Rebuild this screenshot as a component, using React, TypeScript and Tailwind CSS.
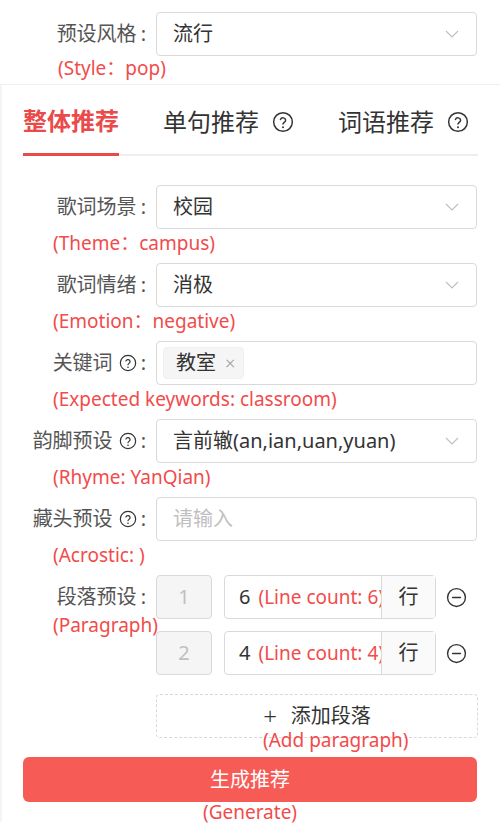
import React from "react";

const font = "font-['Noto_Sans','Noto_Sans_CJK_SC',sans-serif]";

const HelpIcon = ({ size = 18 }: { size?: number }) => (
  <svg
    width={size}
    height={size}
    viewBox="0 0 24 24"
    fill="none"
    stroke="#333"
    strokeWidth={1.6}
    strokeLinecap="round"
    strokeLinejoin="round"
  >
    <circle cx="12" cy="12" r="10.2" />
    <path d="M9.2 9.3a2.9 2.9 0 0 1 5.6 1c0 1.9-2.8 2.4-2.8 4" />
    <path d="M12 17.6h.01" strokeWidth={2.2} />
  </svg>
);

const Chevron = () => (
  <svg width="14" height="8" viewBox="0 0 14 8" fill="none">
    <polyline points="1,1 7,7 13,1" stroke="#bfbfbf" strokeWidth={1.2} />
  </svg>
);

const MinusCircle = () => (
  <svg width="21" height="21" viewBox="0 0 24 24" fill="none" stroke="#333" strokeWidth={1.6}>
    <circle cx="12" cy="12" r="10.2" />
    <path d="M7.5 12h9" strokeLinecap="round" />
  </svg>
);

const Note = ({ children, className = "" }: { children: React.ReactNode; className?: string }) => (
  <div className={`text-[19px] text-[#f24b4b] whitespace-nowrap ${className}`}>{children}</div>
);

const Label = ({ text, help }: { text: string; help?: boolean }) => (
  <div className="w-[156px] shrink-0 flex items-center justify-end pr-[10px] text-[20px] text-[#555]">
    <span>{text}</span>
    {help && (
      <span className="ml-[6px] flex items-center">
        <HelpIcon />
      </span>
    )}
    <span className="ml-[4px]">:</span>
  </div>
);

const Select = ({ value }: { value: string }) => (
  <div className="w-[321px] h-full flex items-center justify-between rounded-[4px] border border-[#d9d9d9] pl-[16px] pr-[17px] bg-white">
    <span className="text-[20px] text-[#333]">{value}</span>
    <Chevron />
  </div>
);

const Field = ({
  label,
  help,
  note,
  children,
}: {
  label: string;
  help?: boolean;
  note: string;
  children: React.ReactNode;
}) => (
  <div>
    <div className="flex h-[44px]">
      <Label text={label} help={help} />
      {children}
    </div>
    <Note className="h-[34px] leading-[28px] pl-[53px]">{note}</Note>
  </div>
);

const ParagraphRow = ({ index, lines }: { index: number; lines: number }) => (
  <div className="flex items-center h-[44px]">
    <div className="w-[56px] h-full flex items-center justify-center rounded-[4px] border border-[#d9d9d9] bg-[#f5f5f5] text-[20px] text-[#bfbfbf]">
      {index}
    </div>
    <div className="ml-[12px] w-[212px] h-full flex rounded-[4px] border border-[#d9d9d9]">
      <div className="flex-1 flex items-center pl-[14px] min-w-0">
        <span className="text-[20px] text-[#333]">{lines}</span>
        <Note className="ml-[8px] leading-[24px]">(Line count: {lines})</Note>
      </div>
      <div className="w-[54px] flex items-center justify-center border-l border-[#d9d9d9] bg-[#fafafa] text-[20px] text-[#333]">
        行
      </div>
    </div>
    <span className="ml-[10px] flex items-center">
      <MinusCircle />
    </span>
  </div>
);

const Tab = ({ text, active, help }: { text: string; active?: boolean; help?: boolean }) => (
  <div
    className={`flex items-center pb-[19px] ${
      active ? "border-b-[3px] border-[#ea4a4a] -mb-[2px] pb-[17px]" : ""
    }`}
  >
    <span
      className={`text-[24px] leading-[26px] ${
        active ? "text-[#ea4a4a] font-bold" : "text-[#333]"
      }`}
    >
      {text}
    </span>
    {help && (
      <span className="ml-[13px] flex items-center">
        <HelpIcon size={22} />
      </span>
    )}
  </div>
);

export default function App() {
  return (
    <div className={`w-[500px] h-[824px] overflow-hidden bg-white ${font}`}>
      {/* style preset */}
      <div className="pt-[12px] border-b border-[#f0f0f0]">
        <div className="flex h-[44px]">
          <Label text="预设风格" />
          <Select value="流行" />
        </div>
        <Note className="h-[28px] leading-[24px] pl-[58px]">(Style：pop)</Note>
      </div>

      <div className="shadow-[inset_2px_0_0_#f4f4f4]">
        {/* tabs */}
        <div className="pt-[23px] pl-[23px] pr-[22px]">
          <div className="flex gap-[44px] border-b-2 border-[#eeeeee]">
            <Tab text="整体推荐" active />
            <Tab text="单句推荐" help />
            <Tab text="词语推荐" help />
          </div>
        </div>

        <div className="pt-[29px]">
          <Field label="歌词场景" note="(Theme：campus)">
            <Select value="校园" />
          </Field>
          <Field label="歌词情绪" note="(Emotion：negative)">
            <Select value="消极" />
          </Field>
          <Field label="关键词" help note="(Expected keywords: classroom)">
            <div className="w-[321px] h-full flex items-center rounded-[4px] border border-[#d9d9d9] pl-[6px]">
              <div className="h-[32px] flex items-center gap-[9px] rounded-[4px] border border-[#f0f0f0] bg-[#f5f5f5] pl-[12px] pr-[8px]">
                <span className="text-[20px] text-[#333]">教室</span>
                <span className="text-[18px] text-[#999] leading-none font-light">×</span>
              </div>
            </div>
          </Field>
          <Field label="韵脚预设" help note="(Rhyme: YanQian)">
            <Select value="言前辙(an,ian,uan,yuan)" />
          </Field>
          <Field label="藏头预设" help note="(Acrostic: )">
            <div className="w-[321px] h-full flex items-center rounded-[4px] border border-[#d9d9d9] pl-[16px]">
              <span className="text-[20px] text-[#bfbfbf]">请输入</span>
            </div>
          </Field>

          {/* paragraph presets */}
          <div className="flex">
            <div className="w-[156px] shrink-0">
              <div className="h-[44px] flex">
                <Label text="段落预设" />
              </div>
              <Note className="-mt-[6px] leading-[24px] pl-[53px]">(Paragraph)</Note>
            </div>
            <div className="flex flex-col gap-[12px]">
              <ParagraphRow index={1} lines={6} />
              <ParagraphRow index={2} lines={4} />
            </div>
          </div>

          <div className="relative mt-[19px] ml-[156px] w-[322px] h-[44px] flex items-center justify-center rounded-[4px] border border-dashed border-[#d9d9d9]">
            <span className="text-[24px] leading-none text-[#333] font-light">+</span>
            <span className="ml-[14px] text-[20px] text-[#333]">添加段落</span>
            <Note className="absolute left-[106px] top-[33px] leading-[24px]">(Add paragraph)</Note>
          </div>

          <div className="mt-[19px] mx-[23px] h-[45px] flex items-center justify-center rounded-[6px] bg-[#f75b55] text-[20px] text-white">
            生成推荐
          </div>
          <Note className="text-center leading-[20px]">(Generate)</Note>
        </div>
      </div>
    </div>
  );
}
